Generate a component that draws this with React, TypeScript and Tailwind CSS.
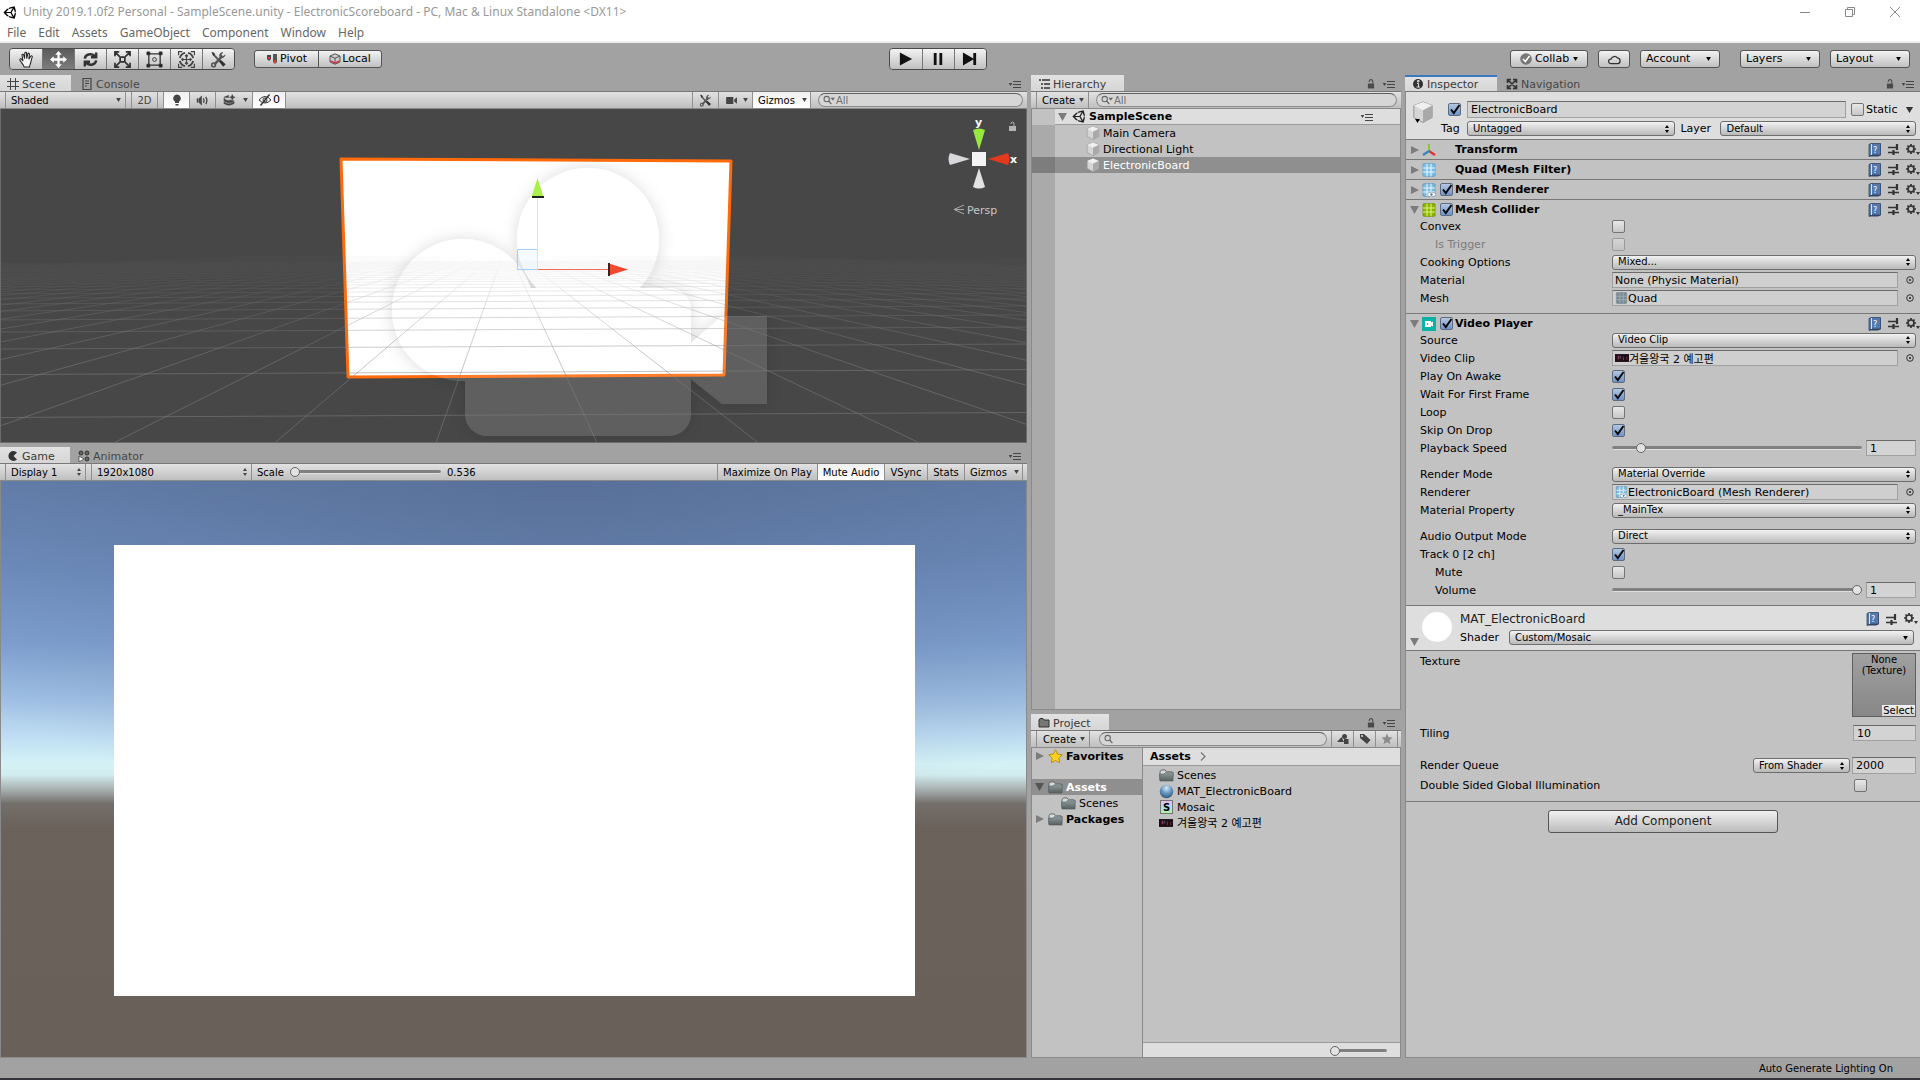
import React, { useId, useState } from "react";
import type { ReactNode } from "react";
import { FaUnity } from "react-icons/fa";

/* ---------- small shared icons ---------- */

const Caret = ({ className = "" }: { className?: string }) => (
  <svg viewBox="0 0 6 5" className={`h-[4px] w-[5px] shrink-0 ${className}`} fill="currentColor">
    <path d="M0 0h6L3 5z" />
  </svg>
);

const UpDown = ({ className = "" }: { className?: string }) => (
  <svg viewBox="0 0 6 8" className={`h-[8px] w-[6px] shrink-0 ${className}`} fill="currentColor">
    <path d="M3 0l2 3h-4zM3 8l2-3h-4z" />
  </svg>
);

const Fold = ({ open = false, dark = false }: { open?: boolean; dark?: boolean }) => (
  <svg viewBox="0 0 10 10" className={`h-[10px] w-[10px] shrink-0 ${dark ? "text-[#555]" : "text-[#7c7c7c]"}`} fill="currentColor">
    {open ? <path d="M0 1h9L4.500 9z" /> : <path d="M1 1L9 5 1 9z" />}
  </svg>
);

const PaneMenu = () => (
  <button aria-label="Pane options" className="flex h-[14px] items-center text-[#444]">
    <Caret className="h-[3px]!" />
    <svg viewBox="0 0 8 8" className="h-[8px] w-[8px]">
      <path d="M0 1.500h8M0 4.500h8M0 7.500h8" stroke="currentColor" />
    </svg>
  </button>
);

const Lock = ({ className = "text-[#4a4a4a]" }: { className?: string }) => (
  <svg viewBox="0 0 9 11" className={`h-[10px] w-[8px] ${className}`}>
    <rect x="1" y="5" width="7" height="5.500" fill="currentColor" />
    <path d="M2.500 3.200V2.600a2 2 0 0 1 4 0V5" fill="none" stroke="currentColor" strokeWidth="1.200" />
  </svg>
);

const Cube = ({ size = "h-[14px] w-[14px]" }: { size?: string }) => (
  <svg viewBox="0 0 24 24" className={`shrink-0 ${size}`}>
    <path d="M12 1l10 4v13l-10 5.500L2 18V5z" fill="#d5d5d5" stroke="#909090" strokeWidth="1" strokeLinejoin="round" />
    <path d="M12 1l10 4-10 5L2 5z" fill="#efefef" />
    <path d="M12 10l10-5v13l-10 5.500z" fill="#a9a9a9" />
  </svg>
);

const Folder = () => (
  <svg viewBox="0 0 16 14" className="h-[13px] w-[15px] shrink-0">
    <defs>
      <linearGradient id="folderFill" x1="0" y1="0" x2="0" y2="1">
        <stop offset="0" stopColor="#8f9a9a" />
        <stop offset="1" stopColor="#56605f" />
      </linearGradient>
    </defs>
    <path d="M1 12V3l1.500-2h4L8 3h6v9z" fill="#d5dada" stroke="#5c6464" />
    <path d="M.5 5.500h4.500L6.500 4h9L15 13H1z" fill="url(#folderFill)" stroke="#525b5b" strokeWidth=".6" />
  </svg>
);

const Star = ({ className }: { className: string }) => (
  <svg viewBox="0 0 16 16" className={className}>
    <path d="M8 .8l2.200 4.700 5.100.6-3.800 3.500 1 5.100L8 12.200l-4.500 2.500 1-5.100L.7 6.100l5.100-.6z" fill="currentColor" strokeLinejoin="round" />
  </svg>
);

const ClipThumb = () => (
  <svg viewBox="0 0 16 9" className="h-[8px] w-[14px] shrink-0">
    <rect width="16" height="9" fill="#1c0d14" />
    <rect x="3" y="2" width="2" height="4" fill="#8c3350" />
    <rect x="6" y="2" width="1" height="3" fill="#5b5a9c" />
    <rect x="9" y="3" width="1" height="4" fill="#a33b30" />
    <rect x="13" y="3" width="1" height="4" fill="#73303a" />
  </svg>
);

const Magnifier = ({ caret = true }: { caret?: boolean }) => (
  <svg viewBox="0 0 14 10" className="h-[10px] w-[13px] shrink-0 text-[#666]">
    <circle cx="4" cy="4" r="2.900" fill="none" stroke="currentColor" strokeWidth="1.100" />
    <path d="M6 6l3 3.500" stroke="currentColor" strokeWidth="1.400" />
    {caret && <path d="M8 2.500h5l-2.500 3z" fill="currentColor" />}
  </svg>
);

const Wrench = ({ className }: { className: string }) => (
  <svg viewBox="0 0 18 18" className={className}>
    <path d="M3 3l10 10.500" stroke="#555" strokeWidth="2" />
    <path d="M10.500 11l3.500 4.500 1.500-1.500-4-3.500z" fill="#333" stroke="#333" strokeWidth="1.500" />
    <path d="M1.500 1l2 4 2-1.500-1.500-2z" fill="#333" />
    <path d="M4.500 14.500l7.500-8" stroke="#555" strokeWidth="2.600" />
    <path d="M16.500 3.500l-2.800 2-1.600-1.600 2-2.800a4 4 0 0 0-4 5.600 4 4 0 0 0 6.400-3.200z" fill="#555" />
    <circle cx="3.800" cy="14.800" r="2" fill="none" stroke="#555" strokeWidth="1.600" />
  </svg>
);

/* ---------- form controls ---------- */

const Select = ({ value, label, className = "", down = false, id }: { value: string; label?: string; className?: string; down?: boolean; id?: string }) => (
  <span className={`relative flex h-[15px] min-w-0 items-center rounded-[3px] border border-[#6e6e6e] bg-linear-to-b from-[#f2f2f2] to-[#b9b9b9] ${className}`}>
    <select id={id} aria-label={label} className="h-full w-full appearance-none bg-transparent pr-3 pl-[5px] text-[10px] leading-[12px] outline-none">
      <option>{value}</option>
    </select>
    {down ? <Caret className="pointer-events-none absolute right-[5px]" /> : <UpDown className="pointer-events-none absolute right-[4px]" />}
  </span>
);

const Check = ({ id, label, checked = false, disabled = false }: { id?: string; label?: string; checked?: boolean; disabled?: boolean }) => (
  <span className="relative block h-[13px] w-[13px] shrink-0">
    <input
      id={id}
      aria-label={label}
      type="checkbox"
      defaultChecked={checked}
      disabled={disabled}
      className="peer block h-[13px] w-[13px] appearance-none rounded-[2px] border border-[#747474] bg-linear-to-b from-[#e8e8e8] to-[#c6c6c6] checked:border-[#5d6c80] checked:from-[#b4c7e0] checked:to-[#6f94c9] disabled:opacity-50"
    />
    <svg viewBox="0 0 13 13" className="pointer-events-none absolute inset-0 hidden peer-checked:block">
      <path d="M3 6.500l2.800 3.500L11.500 2" fill="none" stroke="#0a0a0a" strokeWidth="2" />
    </svg>
  </span>
);

const TextField = ({ id, label, value, className = "" }: { id?: string; label?: string; value: string; className?: string }) => (
  <input
    id={id}
    aria-label={label}
    defaultValue={value}
    className={`h-[16px] min-w-0 border border-[#a0a0a0] border-t-[#6b6b6b] bg-[#d3d3d3] px-[3px] text-[11px] leading-[13px] outline-none ${className}`}
  />
);

const Range = ({ id, label, value, className = "" }: { id?: string; label?: string; value: number; className?: string }) => (
  <input
    id={id}
    aria-label={label}
    type="range"
    min={0}
    max={100}
    defaultValue={value}
    className={`h-[12px] min-w-0 appearance-none bg-transparent [&::-webkit-slider-runnable-track]:h-[4px] [&::-webkit-slider-runnable-track]:rounded-full [&::-webkit-slider-runnable-track]:border-b [&::-webkit-slider-runnable-track]:border-[#e0e0e0] [&::-webkit-slider-runnable-track]:bg-[#808080] [&::-webkit-slider-thumb]:-mt-[3px] [&::-webkit-slider-thumb]:h-[10px] [&::-webkit-slider-thumb]:w-[10px] [&::-webkit-slider-thumb]:appearance-none [&::-webkit-slider-thumb]:rounded-full [&::-webkit-slider-thumb]:border [&::-webkit-slider-thumb]:border-[#666] [&::-webkit-slider-thumb]:bg-[#e2e2e2] ${className}`}
  />
);

const Search = ({ label, text = "", caret = true, className = "" }: { label: string; text?: string; caret?: boolean; className?: string }) => (
  <span className={`flex h-[14px] items-center rounded-full border border-[#8b8b8b] border-t-[#5e5e5e] bg-[#d6d6d6] pl-[4px] ${className}`}>
    <Magnifier caret={caret} />
    <input aria-label={label} placeholder={text} className="h-full min-w-0 flex-1 bg-transparent text-[10px] leading-[12px] outline-none placeholder:text-[#707070]" />
  </span>
);

/* ---------- window frame ---------- */

function TitleBar() {
  return (
    <header className="bg-white font-['Noto_Sans',sans-serif] text-[12px]">
      <div className="flex h-[22px] items-center pt-[2px] pl-[3px] text-[#999]">
        <FaUnity className="h-[15px] w-[15px] text-black" />
        <h1 className="ml-[5px] flex-1 text-[12px] whitespace-nowrap">Unity 2019.1.0f2 Personal - SampleScene.unity - ElectronicScoreboard - PC, Mac &amp; Linux Standalone &lt;DX11&gt;</h1>
        <div className="flex gap-[35px] pr-[20px]">
          <button aria-label="Minimize">
            <svg viewBox="0 0 10 10" className="h-[10px] w-[10px]"><path d="M0 5.500h10" stroke="#888" /></svg>
          </button>
          <button aria-label="Restore">
            <svg viewBox="0 0 10 10" className="h-[10px] w-[10px]" fill="none" stroke="#888"><path d="M.5 2.500h7v7h-7zM2.500 2.500v-2h7v7h-2" /></svg>
          </button>
          <button aria-label="Close">
            <svg viewBox="0 0 10 10" className="h-[10px] w-[10px]"><path d="M0 0l10 10M10 0L0 10" stroke="#888" /></svg>
          </button>
        </div>
      </div>
      <nav className="flex h-[19px] items-start gap-[12px] pl-[7px] leading-[22px] text-[#666]">
        {["File", "Edit", "Assets", "GameObject", "Component", "Window", "Help"].map((m) => (
          <button key={m}>{m}</button>
        ))}
      </nav>
      <div className="h-[2px] bg-[#ededed]" />
    </header>
  );
}

const toolIcons: { name: string; icon: ReactNode }[] = [
  {
    name: "Hand",
    icon: <path d="M6.500 17C6 14 3 12 2 9.500c-.3-1.200 1.200-1.800 2-.6l1.300 1.700L4.200 4.500c-.2-1.300 1.300-1.600 1.700-.4L7 8l.2-5.800c.1-1.300 1.800-1.200 1.800 0L9.200 8l1.200-5c.3-1.200 1.800-.9 1.700.4L11.500 8.600l1.900-3c.7-1 2.100-.3 1.700.8-1 2.500-1.200 4.500-1.700 6.300-.4 1.500-1.200 2.500-1.200 4.300z" fill="#f4f4f4" stroke="#222" strokeWidth="1.100" />,
  },
  {
    name: "Move",
    icon: <path d="M9 0l3.500 4h-2.300v3.800H14V5.500L18 9l-4 3.500v-2.300h-3.800V14h2.300L9 18l-3.500-4h2.300v-3.800H4v2.300L0 9l4-3.500v2.300h3.800V4H5.500z" fill="#fff" />,
  },
  {
    name: "Rotate",
    icon: <path d="M3 8C3.500 3.500 9.500 1.800 13.500 5.300M15 10c-.5 4.500-6.500 6.200-10.500 2.700M15 1.500v5.200h-5.500M3 16.500v-5.200h5.500" fill="none" stroke="#333" strokeWidth="2.600" />,
  },
  {
    name: "Scale",
    icon: <path d="M6.500 6.500h5v5h-5zM6 6L2 2M12 6l4-4M6 12l-4 4M12 12l4 4M1 5.500V1h4.500M12.500 1H17v4.500M1 12.500V17h4.500M12.500 17H17v-4.500" fill="none" stroke="#333" strokeWidth="1.800" />,
  },
  {
    name: "Rect",
    icon: (
      <g fill="none" stroke="#333">
        <path d="M3 3h12v12H3z" strokeWidth="1.400" />
        <circle cx="9" cy="9" r="2" />
        <path d="M1 1h3v3H1zM14 1h3v3h-3zM1 14h3v3H1zM14 14h3v3h-3z" fill="#222" />
      </g>
    ),
  },
  {
    name: "Transform",
    icon: (
      <g fill="none" stroke="#444">
        <path d="M9 4v10M4 9h10M7.500 5.500L9 4l1.500 1.500M7.500 12.500L9 14l1.500-1.500M5.500 7.500L4 9l1.500 1.500M12.500 7.500L14 9l-1.500 1.500" strokeWidth="1.300" />
        <path d="M2 7.500a7.500 7.500 0 0 1 5.500-5.500M16 7.500a7.500 7.500 0 0 0-5.500-5.500M2 10.500a7.500 7.500 0 0 0 5.500 5.500M16 10.500a7.500 7.500 0 0 1-5.500 5.500" strokeWidth="2" />
        <path d="M.5 4.500v-4h4M17.500 4.500v-4h-4M.5 13.500v4h4M17.500 13.500v4h-4" strokeWidth="1.500" />
      </g>
    ),
  },
];

const topButton = "flex h-[18px] items-center rounded-[3px] border border-[#555] bg-linear-to-b from-[#f3f3f3] to-[#c0c0c0] text-[11px]";

function Toolbar() {
  const [tool, setTool] = useState("Move");
  return (
    <div className="grid h-[32px] grid-cols-[1fr_auto_1fr] items-center pr-[10px] pl-[9px]">
      <div className="flex items-center">
        <div className="flex h-[22px] overflow-hidden rounded-[4px] border border-[#4a4a4a]">
          {[...toolIcons, { name: "Custom", icon: null }].map((t, i) => (
            <button
              key={t.name}
              aria-label={t.name}
              onClick={() => setTool(t.name)}
              className={`flex w-[32px] items-center justify-center bg-linear-to-b ${i ? "border-l border-[#777]" : ""} ${tool === t.name ? "from-[#5b5b5b] to-[#7d7d7d]" : "from-[#f3f3f3] to-[#c0c0c0]"}`}
            >
              {t.icon ? <svg viewBox="0 0 18 18" className="h-[17px] w-[17px]">{t.icon}</svg> : <Wrench className="h-[17px] w-[17px]" />}
            </button>
          ))}
        </div>
        <div className="ml-[19px] flex">
          <button className={`${topButton} w-[65px] justify-center gap-[2px] rounded-r-none`}>
            <svg viewBox="0 0 12 12" className="h-[12px] w-[12px]">
              <path d="M1 2h4v4l-2 2-2-2z" fill="#444" /><path d="M2 4h2v2H2z" fill="#e33" />
              <path d="M7 1h4v8l-2 2-2-2z" fill="#555" /><path d="M8 7h2v3H8z" fill="#e33" />
            </svg>
            Pivot
          </button>
          <button className={`${topButton} -ml-[1px] w-[64px] justify-center gap-[1px] rounded-l-none`}>
            <svg viewBox="0 0 12 12" className="h-[12px] w-[12px]">
              <path d="M6 .8l5 2.200v6L6 11.200 1 9V3z" fill="#ccc" stroke="#555" />
              <path d="M1 3l5 2.300L11 3M6 5.300V11" fill="none" stroke="#555" />
              <path d="M1.500 8l4.500 2 4.500-2" fill="none" stroke="#d23c4a" strokeWidth="1.500" />
            </svg>
            Local
          </button>
        </div>
      </div>
      <div className="-ml-[44px] flex h-[22px] overflow-hidden rounded-[4px] border border-[#4a4a4a]">
        {[
          ["Play", "M2 1.500L15 8.500 2 15.500z"],
          ["Pause", "M4 2h3v13H4zM10 2h3v13h-3z"],
          ["Step", "M1 1.500L12 8 12 2h3v13h-3V9L1 15.500z"],
        ].map(([n, d], i) => (
          <button key={n} aria-label={n} className={`flex w-[32px] items-center justify-center bg-linear-to-b from-[#f3f3f3] to-[#c0c0c0] ${i ? "border-l border-[#777]" : ""}`}>
            <svg viewBox="0 0 17 17" className="h-[16px] w-[16px]"><path d={d} fill="#111" /></svg>
          </button>
        ))}
      </div>
      <div className="flex justify-end">
        <button className={`${topButton} w-[78px] justify-center gap-[3px]`}>
          <svg viewBox="0 0 12 12" className="h-[12px] w-[12px]">
            <circle cx="6" cy="6" r="5.800" fill="#777" /><path d="M3 6l2.300 2.500L9.500 3" fill="none" stroke="#fff" strokeWidth="1.500" />
          </svg>
          Collab <Caret className="ml-[1px]" />
        </button>
        <button aria-label="Services" className={`${topButton} ml-[10px] w-[32px] justify-center`}>
          <svg viewBox="0 0 16 12" className="h-[11px] w-[15px]">
            <path d="M4 10.500a2.500 2.500 0 0 1 .2-5 4 4 0 0 1 7-1.200A3.200 3.200 0 0 1 12 10.500z" fill="none" stroke="#333" strokeWidth="1.400" />
          </svg>
        </button>
        {[
          ["Account", "ml-[10px]"],
          ["Layers", "ml-[20px]"],
          ["Layout", "ml-[10px]"],
        ].map(([n, m]) => (
          <button key={n} className={`${topButton} w-[80px] justify-between pr-[8px] pl-[5px] ${m}`}>
            {n}
            <Caret />
          </button>
        ))}
      </div>
    </div>
  );
}

/* ---------- panels ---------- */

function Tabs({ tabs, lock = false, focus = false }: { tabs: { name: string; icon: ReactNode; w: string }[]; lock?: boolean; focus?: boolean }) {
  return (
    <div className="flex h-[17px] shrink-0 items-stretch border-b border-[#787878]">
      {tabs.map((t, i) => (
        <button
          key={t.name}
          className={`flex items-center gap-[3px] pl-[7px] text-[11px] leading-[13px] ${t.w} ${i === 0 ? `bg-linear-to-b from-[#e2e2e2] to-[#d6d6d6] text-[#3a3a3a] ${focus ? "border-t-2 border-[#3d78c4]" : "pt-[2px]"}` : "pt-[2px] text-[#464646]"}`}
        >
          {t.icon}
          {t.name}
        </button>
      ))}
      <div className="flex flex-1 items-center justify-end gap-[7px] pt-[2px] pr-[6px]">
        {lock && <Lock />}
        <PaneMenu />
      </div>
    </div>
  );
}

const Bar = ({ children }: { children: ReactNode }) => (
  <div className="flex h-[17px] shrink-0 items-center border-b border-[#8a8a8a] bg-linear-to-b from-[#e2e2e2] to-[#bfbfbf] text-[10px]">{children}</div>
);

const barItem = "flex h-full shrink-0 items-center border-r border-[#8f8f8f]";
const pressed = "bg-linear-to-b from-[#f0f0f0] to-white";

const ti = "h-[12px] w-[12px] shrink-0";

/* Ground grid: lines every 161 units along the bottom edge, meeting at (506, 246). */
const spokes = Array.from({ length: 63 }, (_, i) => 91 + (i - 31) * 161);
const rungs = Array.from({ length: 30 }, (_, k) => 246 + 500 / (2.95 + k));

function SceneView() {
  return (
    <div className="relative min-h-0 flex-1 overflow-hidden border-x border-b border-[#6c6c6c] bg-[#474747]">
      <svg viewBox="1 109 1025 333" preserveAspectRatio="xMidYMid slice" className="block h-full w-full">
        <defs>
          <linearGradient id="gridFade" x1="0" y1="256" x2="0" y2="370" gradientUnits="userSpaceOnUse">
            <stop offset="0" stopColor="#fff" stopOpacity="0.05" />
            <stop offset="0.15" stopColor="#fff" stopOpacity="0.15" />
            <stop offset="0.5" stopColor="#fff" stopOpacity="0.6" />
            <stop offset="1" stopColor="#fff" />
          </linearGradient>
          <mask id="gridMask" maskUnits="userSpaceOnUse" x="0" y="256" width="1030" height="190">
            <rect x="0" y="256" width="1030" height="190" fill="url(#gridFade)" />
          </mask>
          <filter id="iconSoft" x="-20%" y="-20%" width="140%" height="140%">
            <feGaussianBlur in="SourceAlpha" stdDeviation="8" result="b" />
            <feComposite in="b" in2="SourceAlpha" operator="out" result="o" />
            <feColorMatrix in="o" values="0 0 0 0 0  0 0 0 0 0  0 0 0 0 0  0 0 0 .14 0" result="shadow" />
            <feColorMatrix in="SourceGraphic" values="1 0 0 0 0  0 1 0 0 0  0 0 1 0 0  0 0 0 .13 0" result="body" />
            <feMerge>
              <feMergeNode in="shadow" />
              <feMergeNode in="body" />
            </feMerge>
          </filter>
        </defs>
        <path d="M341 159L731 161 724 375 348 377z" fill="#fff" stroke="#ff6a0a" strokeWidth="3" strokeLinejoin="round" />
        <g filter="url(#iconSoft)" fill="#fff">
          <circle cx="588" cy="239" r="71" />
          <circle cx="463" cy="310" r="71" />
          <rect x="465" y="288" width="226" height="148" rx="22" />
          <path d="M691 343l31-27h45v88h-45l-31-25z" />
        </g>
        <g mask="url(#gridMask)" stroke="#848484" strokeOpacity="0.5" fill="none">
          {spokes.map((a) => (
            <path key={a} d={`M506 246L${506 + a} 442.700`} />
          ))}
          {rungs.map((y) => (
            <path key={y} d={`M0 ${y + 2}L1030 ${y - 3}`} />
          ))}
        </g>
        <path d="M517.500 249.500h20v20h-20z" fill="#e8f4ff" fillOpacity=".4" stroke="#9fd0fb" />
        <path d="M537.500 269V197" stroke="#d4f59a" />
        <path d="M538 269.500h72" stroke="#f2705a" />
        <path d="M537.500 178l6 19h-12z" fill="#a9f04b" />
        <path d="M532 197h12" stroke="#222" strokeWidth="2" />
        <path d="M628 269.500l-19 6v-12z" fill="#f2492f" />
        <path d="M609 263v13" stroke="#40201c" strokeWidth="2" />
      </svg>
      <svg viewBox="940 109 86 115" className="absolute top-0 right-0 h-[115px] w-[86px]" fontFamily="DejaVu Sans" fontSize="11">
        <g fill="#fff" fontWeight="bold">
          <text x="975" y="126">y</text>
          <text x="1010" y="163">x</text>
        </g>
        <path d="M973 130q6-3 12 0l-6 20z" fill="#97e83f" />
        <path d="M1008 153q3 6 0 12l-20-6z" fill="#e33a1e" />
        <path d="M950 153q-3 6 0 12l20-6z" fill="#d8d8dc" />
        <path d="M973 187q6 3 12 0l-6-19z" fill="#e2e2e4" />
        <path d="M972 152h14v14h-14z" fill="#f3f3f3" />
        <path d="M964 205l-10 4.500 10 4.500M954 209.500h10" fill="none" stroke="#aaa" />
        <text x="967" y="214" fill="#c6c6c6">Persp</text>
        <path d="M1009 126h7v5h-7z" fill="#b4b4b4" />
        <path d="M1011 124v-1q1.500-2 3 0v3" fill="none" stroke="#b4b4b4" />
      </svg>
    </div>
  );
}

function ScenePanel() {
  return (
    <section className="flex min-h-0 flex-col">
      <Tabs
        tabs={[
          { name: "Scene", w: "w-[71px]", icon: <svg viewBox="0 0 12 12" className={ti}><path d="M3.500 0v12M8.500 0v12M0 3.500h12M0 8.500h12" stroke="#444" /></svg> },
          { name: "Console", w: "ml-[3px]", icon: <svg viewBox="0 0 12 12" className={ti}><path d="M2 .5h8v11H2zM4 3h4M4 5.500h4M4 8h2" fill="none" stroke="#444" strokeWidth="1.200" /></svg> },
        ]}
      />
      <Bar>
        <span className={`${barItem} w-[6px]`} />
        <label className={`${barItem} relative w-[120px]`}>
          <select aria-label="Draw mode" className="w-full appearance-none bg-transparent pl-[5px] outline-none"><option>Shaded</option></select>
          <Caret className="absolute right-[4px] text-[#444]" />
        </label>
        <span className={`${barItem} w-[6px]`} />
        <button className={`${barItem} w-[26px] justify-center text-[#444]`}>2D</button>
        <span className={`${barItem} w-[6px]`} />
        <button aria-label="Lighting" className={`${barItem} ${pressed} w-[26px] justify-center`}>
          <svg viewBox="0 0 12 12" className={ti}><path d="M6 .5a3.800 3.800 0 0 1 2 7v1.500H4V7.500a3.800 3.800 0 0 1 2-7zM4.500 10h3v1.500h-3z" fill="#444" /></svg>
        </button>
        <button aria-label="Audio" className={`${barItem} w-[26px] justify-center`}>
          <svg viewBox="0 0 14 12" className="h-[11px] w-[13px]"><path d="M1 4h1v4H1zM3 4l3-3v10L3 8z" fill="#444" stroke="#444" strokeWidth=".6" /><path d="M8 3.500q1.500 2.500 0 5M10.500 2q2.500 4 0 8" fill="none" stroke="#444" strokeWidth="1.400" /></svg>
        </button>
        <button aria-label="Effects" className={`${barItem} w-[37px] justify-between pr-[4px] pl-[7px]`}>
          <svg viewBox="0 0 14 12" className="h-[12px] w-[13px]"><path d="M1 4q3 4 7 2l4 1q-5 4-11 0zM1 8q5 4 11 0v1.800q-6 3.500-11 0zM1 3l5-2v2.500z" fill="#444" stroke="#444" strokeWidth=".5" /><path d="M10 0l.9 2.100L13 3l-2.100.9L10 6l-.9-2.100L7 3l2.100-.9z" fill="#444" stroke="#444" strokeWidth=".5" /></svg>
          <Caret className="text-[#444]" />
        </button>
        <button aria-label="Hidden objects" className={`${barItem} ${pressed} w-[33px] justify-center gap-[1px] text-[11px]`}>
          <svg viewBox="0 0 14 12" className="h-[12px] w-[14px]" fill="none" stroke="#333"><path d="M1 6q6-7 12 0-6 6-12 0z" /><circle cx="7" cy="6" r="2" /><path d="M2.500 11.500l9-11" strokeWidth="1.400" /></svg>0
        </button>
        <span className="flex-1" />
        <button aria-label="Component editor tools" className="flex h-full w-[27px] items-center justify-center border-x border-[#8f8f8f]"><Wrench className="h-[13px] w-[13px]" /></button>
        <button aria-label="Camera settings" className={`${barItem} w-[34px] justify-between pr-[4px] pl-[7px]`}>
          <svg viewBox="0 0 13 10" className="h-[9px] w-[12px]"><path d="M0 1h8v8H0zM9 4l3-2.500v7L9 6z" fill="#444" /></svg>
          <Caret className="text-[#444]" />
        </button>
        <button className={`${barItem} ${pressed} w-[58px] justify-between pr-[3px] pl-[5px]`}>Gizmos<Caret className="text-[#444]" /></button>
        <Search label="Search scene" text="All" className="mr-[4px] ml-[7px] w-[205px]" />
      </Bar>
      <SceneView />
    </section>
  );
}

function GamePanel() {
  return (
    <section className="flex min-h-0 flex-col">
      <Tabs
        tabs={[
          { name: "Game", w: "w-[70px]", icon: <svg viewBox="0 0 12 12" className={ti}><path d="M10 2.500A5 5 0 1 0 10 9.500L6.500 6z" fill="#333" /></svg> },
          {
            name: "Animator",
            w: "ml-[1px]",
            icon: <svg viewBox="0 0 12 12" className={ti}><g fill="#666" stroke="#222" strokeWidth=".8"><circle cx="3" cy="3" r="2" /><circle cx="9" cy="3" r="2" /><circle cx="9" cy="9" r="2" /></g><path d="M1 6l5 3-5 3z" fill="#fff" stroke="#333" strokeWidth=".7" /></svg>,
          },
        ]}
      />
      <Bar>
        <span className={`${barItem} w-[6px]`} />
        <label className={`${barItem} relative w-[80px]`}>
          <select aria-label="Display" className="w-full appearance-none bg-transparent pl-[5px] outline-none"><option>Display 1</option></select>
          <UpDown className="absolute right-[3px] text-[#444]" />
        </label>
        <span className={`${barItem} w-[6px]`} />
        <label className={`${barItem} relative w-[160px]`}>
          <select aria-label="Resolution" className="w-full appearance-none bg-transparent pl-[5px] outline-none"><option>1920x1080</option></select>
          <UpDown className="absolute right-[3px] text-[#444]" />
        </label>
        <label htmlFor="gameScale" className="ml-[5px] w-[33px]">Scale</label>
        <Range id="gameScale" value={0} className="w-[151px]" />
        <span className="ml-[6px]">0.536</span>
        <span className="flex-1" />
        <button className="flex h-full w-[101px] items-center justify-center border-x border-[#8f8f8f]">Maximize On Play</button>
        <button className={`${barItem} ${pressed} w-[67px] justify-center`}>Mute Audio</button>
        <button className={`${barItem} w-[43px] justify-center`}>VSync</button>
        <button className={`${barItem} w-[37px] justify-center`}>Stats</button>
        <button className={`${barItem} mr-[4px] w-[58px] justify-between pr-[3px] pl-[5px]`}>Gizmos<Caret className="text-[#444]" /></button>
      </Bar>
      <div className="flex min-h-0 flex-1 border-x border-b border-[#8a8a8a] bg-[radial-gradient(ellipse_75%_60%_at_55%_0%,#4e628888,#4e628800),linear-gradient(to_bottom,#6480ac_0%,#6f8fbf_15%,#80a2d2_28%,#a0c1e5_38%,#bddcf2_44%,#d4f2f6_49%,#d2ecee_51%,#9fa5a5_54%,#746f6b_56%,#6b625c_60%,#69605a_100%)] pt-[64px] pr-[111px] pb-[61px] pl-[113px]">
        <div className="flex-1 bg-white" />
      </div>
    </section>
  );
}

function HierarchyPanel() {
  return (
    <section className="flex min-h-0 flex-col">
      <Tabs lock tabs={[{ name: "Hierarchy", w: "w-[93px]", icon: <svg viewBox="0 0 12 12" className={ti}><path d="M1 2h2M4 2h8M3 6h2M6 6h6M3 10h2M6 10h6" stroke="#333" strokeWidth="1.300" /></svg> }]} />
      <Bar>
        <span className={`${barItem} w-[6px]`} />
        <button className={`${barItem} w-[52px] justify-between pr-[4px] pl-[5px]`}>Create<Caret className="text-[#444]" /></button>
        <Search label="Search hierarchy" text="All" className="mr-[4px] ml-[7px] flex-1" />
      </Bar>
      <div className="flex min-h-0 flex-1 flex-col border border-t-0 border-[#8a8a8a] bg-[#c2c2c2] text-[11px] leading-[15px]">
        <div className="flex h-[16px]">
          <span className="w-[23px]" />
          <div className="flex flex-1 items-center border-b border-[#9a9a9a] bg-[#dedede] pl-[3px] font-bold">
            <Fold open />
            <FaUnity className="mr-[2px] ml-[4px] h-[15px] w-[15px] text-[#222]" />
            <span className="flex-1">SampleScene</span>
            <span className="mr-[27px]"><PaneMenu /></span>
          </div>
        </div>
        <ul>
          {["Main Camera", "Directional Light", "ElectronicBoard"].map((n, i) => (
            <li key={n} className="flex h-[16px]">
              <span className={`w-[23px] ${i === 2 ? "bg-[#7d7d7d]" : "bg-[#aaaaaa]"}`} />
              <span className={`flex flex-1 items-center gap-[3px] pl-[31px] ${i === 2 ? "bg-[#8f8f8f] text-white" : ""}`}>
                <Cube />
                {n}
              </span>
            </li>
          ))}
        </ul>
        <div className="w-[23px] flex-1 bg-[#aaaaaa]" />
      </div>
    </section>
  );
}

const treeRow = "flex h-[16px] items-center gap-[3px]";

function ProjectPanel() {
  return (
    <section className="flex min-h-0 flex-col">
      <Tabs lock tabs={[{ name: "Project", w: "w-[78px]", icon: <svg viewBox="0 0 12 12" className={ti}><path d="M1 10V3l1-1.500h3L6 3h5v7z" fill="#777" stroke="#333" /></svg> }]} />
      <Bar>
        <span className={`${barItem} w-[6px]`} />
        <button className={`${barItem} w-[53px] justify-between pr-[4px] pl-[6px]`}>Create<Caret className="text-[#444]" /></button>
        <Search label="Search project" caret={false} className="mr-[4px] ml-[9px] flex-1" />
        <button aria-label="Search by type" className="flex h-full w-[23px] items-center justify-center border-x border-[#8f8f8f]">
          <svg viewBox="0 0 12 12" className={ti} fill="#444"><path d="M0 9l4.500-5L7 9z" /><circle cx="7.500" cy="3.500" r="2.500" /><path d="M7 6h4.500v5H7z" /></svg>
        </button>
        <button aria-label="Search by label" className={`${barItem} w-[22px] justify-center`}>
          <svg viewBox="0 0 12 12" className={ti}><path d="M1 1h4l6.500 6L8 11 1 5z" fill="#444" /><circle cx="3" cy="3" r="1" fill="#ddd" /></svg>
        </button>
        <button aria-label="Save search" className={`${barItem} mr-[3px] w-[22px] justify-center`}><Star className="h-[12px] w-[12px] text-[#8c8c8c]" /></button>
      </Bar>
      <div className="flex min-h-0 flex-1 border border-t-0 border-[#8a8a8a] bg-[#c2c2c2] text-[11px] leading-[15px]">
        <div className="w-[30%] min-w-[111px] border-r border-[#8a8a8a] font-bold">
          <div className={`${treeRow} pl-[3px]`}><Fold /><Star className="h-[15px] w-[15px] stroke-[#b98a10] text-[#ffd21e]" />Favorites</div>
          <div className={`${treeRow} mt-[15px] bg-[#8f8f8f] pl-[3px] text-white`}><Fold open dark /><Folder />Assets</div>
          <div className={`${treeRow} pl-[29px] font-normal`}><Folder />Scenes</div>
          <div className={`${treeRow} pl-[3px]`}><Fold /><Folder />Packages</div>
        </div>
        <div className="flex flex-1 flex-col">
          <div className="flex h-[18px] items-center gap-[9px] border-b border-[#9a9a9a] bg-[#dedede] pl-[7px] font-bold">
            Assets
            <svg viewBox="0 0 6 9" className="h-[9px] w-[6px]"><path d="M1 .5l4 4-4 4" fill="none" stroke="#777" strokeWidth="1.300" /></svg>
          </div>
          <ul className="flex-1 pt-[1px]">
            <li className={`${treeRow} pl-[16px]`}><Folder />Scenes</li>
            <li className={`${treeRow} pl-[16px]`}>
              <svg viewBox="0 0 15 15" className="h-[15px] w-[15px]">
                <defs><radialGradient id="ball" cx=".5" cy=".25" r=".8"><stop offset="0" stopColor="#d8eaf8" /><stop offset=".45" stopColor="#6a9cc4" /><stop offset="1" stopColor="#2c4f6e" /></radialGradient></defs>
                <circle cx="7.500" cy="7.500" r="6.800" fill="url(#ball)" />
              </svg>
              MAT_ElectronicBoard
            </li>
            <li className={`${treeRow} pl-[17px]`}>
              <span className="flex h-[14px] w-[13px] items-center justify-center border border-[#777] bg-linear-to-b from-[#e6b8f0] via-[#a8e0f0] to-[#b8f098] text-[10px] font-bold">S</span>
              <span className="ml-[1px]">Mosaic</span>
            </li>
            <li className={`${treeRow} pl-[16px]`}><ClipThumb /><span className="ml-[1px]">겨울왕국 2 예고편</span></li>
          </ul>
          <div className="flex h-[15px] items-center justify-end border-t border-[#9a9a9a] bg-[#dedede] pt-[1px] pr-[13px]">
            <Range label="Thumbnail size" value={0} className="w-[57px]" />
          </div>
        </div>
      </div>
    </section>
  );
}

/* ---------- inspector ---------- */

const HeaderTools = () => (
  <span className="flex items-center gap-[7px]">
    <button aria-label="Help">
      <svg viewBox="0 0 13 14" className="h-[14px] w-[13px]">
        <path d="M1 1.500h11.500v11L10 13.500H1z" fill="#34496b" />
        <path d="M1 1.500l2-1h9.500v11.500H3L1 13.500z" fill="#5478ad" stroke="#2b3c58" strokeWidth=".7" />
        <path d="M3.500 1v11" stroke="#d8e4f4" />
        <text x="5" y="10" fontSize="8" fontFamily="DejaVu Sans" fill="#fff">?</text>
      </svg>
    </button>
    <button aria-label="Presets">
      <svg viewBox="0 0 11 11" className="h-[11px] w-[11px]" fill="none" stroke="#333"><path d="M0 3.500h8M0 8.500h11" strokeWidth="1.400" /><path d="M9 0v6M5.500 6v5" strokeWidth="2.200" /></svg>
    </button>
    <button aria-label="Component menu">
      <svg viewBox="0 0 14 12" className="h-[12px] w-[14px]">
        <circle cx="5" cy="5" r="3" fill="none" stroke="#333" strokeWidth="1.700" />
        <path d="M5 0v2M5 8v2M0 5h2M8 5h2M1.500 1.500l1.300 1.300M7.200 7.200l1.300 1.300M8.500 1.500L7.200 2.800M1.500 8.500l1.300-1.300" stroke="#333" strokeWidth="1.700" />
        <path d="M10 8h4l-2 3z" fill="#333" />
      </svg>
    </button>
  </span>
);

function Component({ title, icon, toggle = false, open = false, children }: { title: string; icon: ReactNode; toggle?: boolean; open?: boolean; children?: ReactNode }) {
  return (
    <section className={`border-t border-[#777] ${open ? "pb-[6px]" : ""}`}>
      <div className={`flex items-center pl-[4px] ${open ? "h-[17px] pt-[2px]" : "h-[19px]"}`}>
        <Fold open={open} />
        <svg viewBox="0 0 14 14" className="ml-[2px] h-[14px] w-[14px] shrink-0">{icon}</svg>
        <span className="ml-[4px] w-[15px]">{toggle && <Check label={title} checked />}</span>
        <h2 className="flex-1 text-[11px] font-bold">{title}</h2>
        <HeaderTools />
      </div>
      {children}
    </section>
  );
}

function Row({ label, indent = false, muted = false, render }: { label: string; indent?: boolean; muted?: boolean; render: (id: string) => ReactNode }) {
  const id = useId();
  return (
    <div className="grid h-[18px] grid-cols-[192fr_304fr] items-center pr-[4px] pl-[14px]">
      <label htmlFor={id} className={`${indent ? "pl-[15px]" : ""} ${muted ? "text-[#7a7a7a]" : ""}`}>{label}</label>
      <div className="flex min-w-0 items-center">{render(id)}</div>
    </div>
  );
}

const ObjectField = ({ id, icon, text }: { id: string; icon?: ReactNode; text: string }) => (
  <>
    <span className="flex h-[16px] min-w-0 flex-1 items-center border border-[#a0a0a0] border-t-[#6b6b6b] bg-[#cfcfcf] pl-[2px]">
      {icon}
      <input id={id} readOnly value={text} className="h-full min-w-0 flex-1 bg-transparent text-[11px] leading-[13px] outline-none" />
    </span>
    <button aria-label="Select object" className="mr-[2px] ml-[8px]">
      <svg viewBox="0 0 8 8" className="h-[8px] w-[8px]"><circle cx="4" cy="4" r="3.300" fill="none" stroke="#333" /><circle cx="4" cy="4" r="1" fill="#222" /></svg>
    </button>
  </>
);

const SliderField = ({ id, value }: { id: string; value: number }) => (
  <>
    <Range id={id} value={value} className="flex-1" />
    <TextField label="Value" value="1" className="ml-[4px] w-[50px]" />
  </>
);

const mesh = (fill: string, line: string, edge: string) => (
  <>
    <path d="M1 1q6-1.500 12 0v12q-6 1.500-12 0z" fill={fill} stroke={edge} strokeWidth=".8" />
    <path d="M5 .5v13M9 .5v13M1 5h12M1 9h12" stroke={line} strokeWidth="1" />
  </>
);
const rendererIcon = (
  <>
    {mesh("#7fbbdc", "#e9f6fd", "#5c96b8")}
    <ellipse cx="9.500" cy="11.500" rx="4" ry="2.300" fill="#fff" stroke="#789" strokeWidth=".6" />
    <circle cx="9.500" cy="11.500" r="1.200" fill="#4a7fa5" />
  </>
);

function Inspector() {
  const [x, y] = [useId(), useId()];
  return (
    <section className="flex min-h-0 flex-col">
      <Tabs
        lock
        focus
        tabs={[
          { name: "Inspector", w: "w-[92px]", icon: <svg viewBox="0 0 12 12" className={ti}><circle cx="6" cy="6" r="5" fill="#333" /><path d="M5 5.500h1.500V9M4.500 9h3.500M5.500 2.500h1.500v1.500h-1.500z" stroke="#eee" strokeWidth=".9" fill="none" /></svg> },
          { name: "Navigation", w: "ml-[2px]", icon: <svg viewBox="0 0 12 12" className={ti}><path d="M2 2l8 8M10 2l-8 8M1.500 5V1.500H5M7 1.500h3.500V5M1.500 7v3.500H5M7 10.500h3.500V7" stroke="#333" strokeWidth="1.600" fill="none" /></svg> },
        ]}
      />
      <div className="min-h-0 flex-1 overflow-hidden border-b border-l border-[#8a8a8a] bg-[#c2c2c2] text-[11px] leading-[13px]">
        <div className="flex h-[47px] items-start bg-[#dedede] pt-[9px] pr-[4px] pl-[6px]">
          <div className="relative w-[36px]">
            <Cube size="h-[22px] w-[22px]" />
            <Caret className="absolute top-[18px] left-[2px] w-[7px]!" />
          </div>
          <div className="flex-1">
            <div className="flex items-center">
              <Check label="Active" checked />
              <TextField label="Name" value="ElectronicBoard" className="ml-[6px] h-[17px] flex-1" />
              <span className="ml-[5px]"><Check id={x} /></span>
              <label htmlFor={x} className="ml-[2px] w-[34px]">Static</label>
              <Caret className="mr-[2px] ml-[5px] h-[6px]! w-[9px]! text-[#333]" />
            </div>
            <div className="mt-[3px] flex items-center">
              <label htmlFor={y} className="-ml-[7px] w-[26px]">Tag</label>
              <Select id={y} value="Untagged" className="flex-[208]" />
              <label htmlFor={y + "l"} className="w-[45px] pl-[5px]">Layer</label>
              <Select id={y + "l"} value="Default" className="flex-[195]" />
            </div>
          </div>
        </div>

        <Component title="Transform" icon={<g fill="none" strokeWidth="2.200"><path d="M7 8V1" stroke="#8cc63f" /><path d="M7 8l6 4" stroke="#d33" /><path d="M7 8l-6 4" stroke="#3a86b8" /></g>} />
        <Component title="Quad (Mesh Filter)" icon={mesh("#7fc0e6", "#eaf7ff", "#5c9cc2")} />
        <Component title="Mesh Renderer" toggle icon={rendererIcon} />
        <Component title="Mesh Collider" toggle open icon={mesh("#8db600", "#dff28a", "#6c8c10")}>
          <Row label="Convex" render={(id) => <Check id={id} />} />
          <Row label="Is Trigger" indent muted render={(id) => <Check id={id} disabled />} />
          <Row label="Cooking Options" render={(id) => <Select id={id} value="Mixed..." className="flex-1" />} />
          <Row label="Material" render={(id) => <ObjectField id={id} text="None (Physic Material)" />} />
          <Row label="Mesh" render={(id) => <ObjectField id={id} text="Quad" icon={<svg viewBox="0 0 14 14" className="h-[12px] w-[13px]">{mesh("#7a8a94", "#a5b0b7", "#7a8a94")}</svg>} />} />
        </Component>
        <Component title="Video Player" toggle open icon={<><path d="M0 0h14v14H0z" fill="#0ab3a6" /><path d="M3 4h6v1.500L11 4.500v5L9 8.500V10H3z" fill="#fff" /><path d="M5 6v2l2-1z" fill="#0ab3a6" /></>}>
          <Row label="Source" render={(id) => <Select id={id} value="Video Clip" className="flex-1" />} />
          <Row label="Video Clip" render={(id) => <ObjectField id={id} text="겨울왕국 2 예고편" icon={<ClipThumb />} />} />
          <Row label="Play On Awake" render={(id) => <Check id={id} checked />} />
          <Row label="Wait For First Frame" render={(id) => <Check id={id} checked />} />
          <Row label="Loop" render={(id) => <Check id={id} />} />
          <Row label="Skip On Drop" render={(id) => <Check id={id} checked />} />
          <Row label="Playback Speed" render={(id) => <SliderField id={id} value={10} />} />
          <div className="h-[8px]" />
          <Row label="Render Mode" render={(id) => <Select id={id} value="Material Override" className="flex-1" />} />
          <Row label="Renderer" render={(id) => <ObjectField id={id} text="ElectronicBoard (Mesh Renderer)" icon={<svg viewBox="0 0 14 14" className="h-[12px] w-[13px]">{rendererIcon}</svg>} />} />
          <Row label="Material Property" render={(id) => <Select id={id} value="_MainTex" className="flex-1" />} />
          <div className="h-[8px]" />
          <Row label="Audio Output Mode" render={(id) => <Select id={id} value="Direct" className="flex-1" />} />
          <Row label="Track 0 [2 ch]" render={(id) => <Check id={id} checked />} />
          <Row label="Mute" indent render={(id) => <Check id={id} />} />
          <Row label="Volume" indent render={(id) => <SliderField id={id} value={100} />} />
        </Component>

        <section className="flex h-[46px] border-y border-[#777] bg-[#dedede] pl-[4px]">
          <span className="mt-[31px]"><Fold open /></span>
          <span className="mt-[6px] ml-[2px] h-[30px] w-[30px] rounded-full bg-white" />
          <div className="flex-1 pl-[8px]">
            <div className="mt-[5px] flex h-[16px] items-center justify-between pr-[2px]">
              <h2 className="text-[12px] text-[#222]">MAT_ElectronicBoard</h2>
              <HeaderTools />
            </div>
            <div className="mt-[3px] flex items-center pr-[6px]">
              <label htmlFor={x + "s"} className="w-[49px]">Shader</label>
              <Select id={x + "s"} value="Custom/Mosaic" down className="flex-1" />
            </div>
          </div>
        </section>

        <div className="border-b border-[#777] pr-[4px] pb-[8px] pl-[14px]">
          <div className="flex items-start justify-between pt-[2px]">
            <span className="mt-[2px]">Texture</span>
            <div className="flex h-[64px] w-[64px] flex-col items-end justify-between border border-[#5f5f5f] bg-linear-to-b from-[#a0a0a0] to-[#878787]">
              <p className="w-full text-center text-[10px] leading-[11px]">None<br />(Texture)</p>
              <button className="bg-linear-to-b from-[#f3f3f3] to-[#d5d5d5] px-[1px] text-[10px] leading-[11px]">Select</button>
            </div>
          </div>
          <div className="mt-[8px] flex items-center justify-between">
            <label htmlFor={x + "t"}>Tiling</label>
            <TextField id={x + "t"} value="10" className="w-[63px]" />
          </div>
          <div className="mt-[16px] flex items-center">
            <label htmlFor={x + "q"} className="flex-1">Render Queue</label>
            <Select id={x + "q"} value="From Shader" className="w-[97px]" />
            <TextField label="Queue" value="2000" className="ml-[2px] h-[17px] w-[64px]" />
          </div>
          <div className="mt-[3px] flex h-[16px] items-center justify-between">
            <label htmlFor={x + "d"}>Double Sided Global Illumination</label>
            <span className="w-[62px]"><Check id={x + "d"} /></span>
          </div>
        </div>
        <button className="mx-auto mt-[8px] block h-[23px] w-[230px] rounded-[3px] border border-[#555] bg-linear-to-b from-[#f0f0f0] to-[#bcbcbc] text-[12px] text-[#222]">Add Component</button>
      </div>
    </section>
  );
}

export default function App() {
  return (
    <div className="flex h-screen flex-col overflow-hidden bg-[#a2a2a2] font-['DejaVu_Sans','Noto_Sans_CJK_KR',sans-serif] text-black">
      <TitleBar />
      <Toolbar />
      <main className="grid min-h-0 flex-1 grid-cols-[1027fr_370fr_515fr] gap-x-[4px]">
        <div className="grid min-h-0 min-w-0 grid-rows-[368fr_611fr] gap-y-[4px]">
          <ScenePanel />
          <GamePanel />
        </div>
        <div className="grid min-h-0 min-w-0 grid-rows-[635fr_344fr] gap-y-[4px]">
          <HierarchyPanel />
          <ProjectPanel />
        </div>
        <Inspector />
      </main>
      <footer className="flex h-[22px] items-center justify-end border-b-2 border-[#34353a] pr-[27px] text-[10px]">Auto Generate Lighting On</footer>
    </div>
  );
}
